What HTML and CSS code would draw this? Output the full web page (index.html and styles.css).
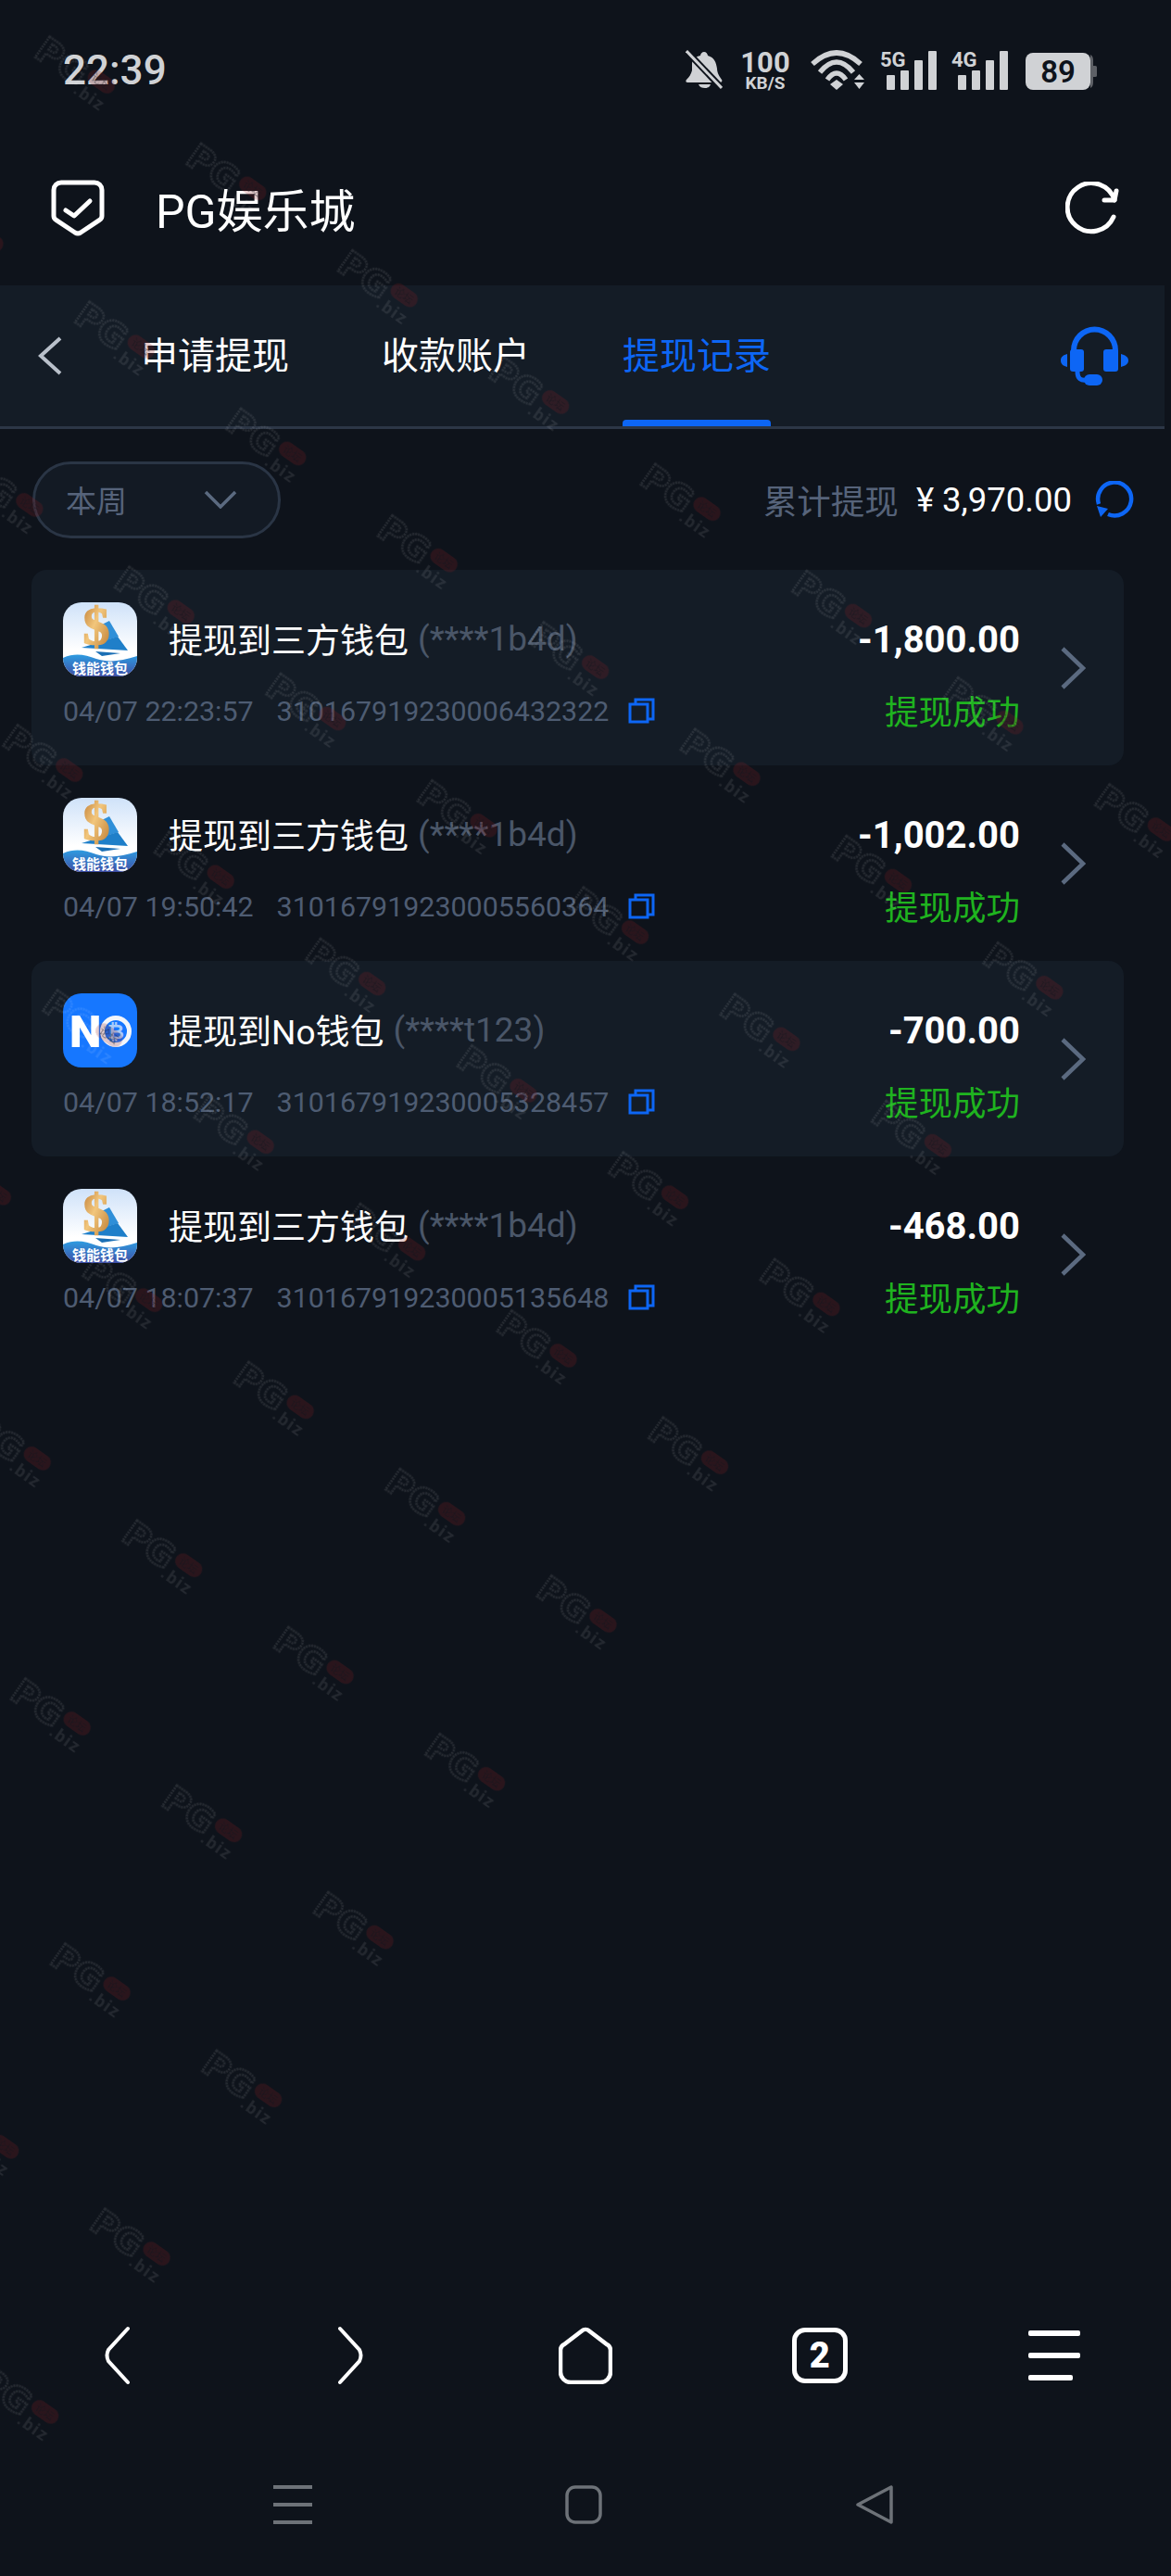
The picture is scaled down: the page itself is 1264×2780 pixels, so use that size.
FILE: index.html
```html
<!DOCTYPE html>
<html lang="zh-CN">
<head>
  <meta charset="UTF-8">
  <title>提现记录</title>
  <link rel="stylesheet" href="styles.css">
</head>
<body>

  <!-- Shared icons -->
  <svg class="defs" width="0" height="0">
    <defs>
      <linearGradient id="sky" x1="0" y1="0" x2="0" y2="1">
        <stop offset="0" stop-color="#cfe2f9"/>
        <stop offset="0.65" stop-color="#ffffff"/>
      </linearGradient>
      <linearGradient id="sea" x1="0" y1="0" x2="0" y2="1">
        <stop offset="0" stop-color="#2e9be0"/>
        <stop offset="1" stop-color="#3f4fa6"/>
      </linearGradient>
      <linearGradient id="gold" x1="0" y1="0" x2="1" y2="1">
        <stop offset="0" stop-color="#b8722a"/>
        <stop offset="0.45" stop-color="#f2c67c"/>
        <stop offset="1" stop-color="#b8762c"/>
      </linearGradient>
      <symbol id="wallet-logo" viewBox="0 0 80 80">
        <rect width="80" height="80" fill="url(#sky)"/>
        <polygon points="42,24 50,20 60,37 47,41" fill="#2f8fd8"/>
        <polygon points="20,49 59,37 70,52" fill="#1f7fc9"/>
        <polygon points="35,53 62,55 42,58" fill="#1b6fb5"/>
        <text x="36" y="45" class="logo-coin" fill="url(#gold)" stroke="url(#gold)">$</text>
        <path d="M0 60c14-6 24-3 36 1s26 3 44-3v22H0z" fill="url(#sea)"/>
        <text x="40" y="77" class="logo-name">钱能钱包</text>
      </symbol>
      <symbol id="copy" viewBox="0 0 30 28">
        <path d="M9 6V2h19v21h-5" fill="none" stroke="#0d66f5" stroke-width="3"/>
        <rect x="3" y="7" width="19" height="19" fill="none" stroke="#0d66f5" stroke-width="3"/>
      </symbol>
      <symbol id="more" viewBox="0 0 28 48">
        <path d="M3 3l22 21L3 45" fill="none" stroke="#5b6a80" stroke-width="4.500"/>
      </symbol>
    </defs>
  </svg>

  <div class="status-bar">
    <span class="clock">22:39</span>
    <div class="status-icons">
      <svg width="40" height="44" viewBox="0 0 40 44">
        <g fill="#d0d2d5">
          <path d="M20 2c2 0 4 2 4 4 7 2 9 7 10 14 0 5 3 9 5 12 1 1 0 3-2 3H2c-2 0-2-2-1-3 3-3 5-6 6-10V14c1-4 4-7 9-8 0-2 2-4 4-4z"/>
          <path d="M14 37h13c-1 3-3 4-6 4s-6-1-7-4z"/>
        </g>
        <path d="M1 1l38 40" stroke="#0e131b" stroke-width="7"/>
        <path d="M1 1l38 40" stroke="#d0d2d5" stroke-width="3"/>
      </svg>
      <div class="net-speed">
        <span class="net-rate">100</span>
        <span class="net-unit">KB/S</span>
      </div>
      <svg class="status-strip" width="309" height="44" viewBox="135 0 309 44">
        <g fill="none" stroke="#d0d2d5" stroke-width="5.500">
          <path d="M137 15Q163-9 189 15"/>
          <path d="M145 24Q163 2 181 24"/>
          <path d="M153 32Q163 18 173 32"/>
        </g>
        <path d="M156 37l7-5 7 5-7 6z" fill="#d0d2d5"/>
        <path d="M182 32l5.500-6 5.500 6zM182 35h11l-5.500 7z" fill="#d0d2d5"/>
        <text x="210" y="18" class="st st-net">5G</text>
        <g fill="#d0d2d5">
          <rect x="217" y="27" width="9" height="16" rx="1"/>
          <rect x="232" y="22" width="9" height="21" rx="1"/>
          <rect x="247" y="11" width="9" height="32" rx="1"/>
          <rect x="262" y="1" width="9" height="42" rx="1"/>
        </g>
        <text x="287" y="18" class="st st-net">4G</text>
        <g fill="#d0d2d5">
          <rect x="294" y="27" width="9" height="16" rx="1"/>
          <rect x="309" y="22" width="9" height="21" rx="1"/>
          <rect x="324" y="11" width="9" height="32" rx="1"/>
          <rect x="339" y="1" width="9" height="42" rx="1"/>
        </g>
        <rect x="367" y="3" width="70" height="40" rx="8" fill="#d0d2d5"/>
        <path d="M437 5c2 1 3 3 3 6v6h2c2 0 2 1 2 2v8c0 1 0 2-2 2h-2v6c0 3-1 5-3 6z" fill="#5d6066"/>
        <text x="402" y="35" class="st st-batt">89</text>
      </svg>
    </div>
  </div>

  <div class="app-header">
    <svg width="60" height="64" viewBox="0 0 60 64" fill="none" stroke="#fff" stroke-linejoin="round" stroke-linecap="round">
      <path d="M12 4h36a8 8 0 0 1 8 8v28a5 5 0 0 1-2.500 4.300L33 58a6 6 0 0 1-6 0L6.500 44.300A5 5 0 0 1 4 40V12a8 8 0 0 1 8-8z" stroke-width="5"/>
      <path d="M17 34l9 6 17-16" stroke-width="5"/>
    </svg>
    <span class="app-title">PG娱乐城</span>
    <svg class="app-reload" width="60" height="60" viewBox="0 0 60 60" fill="none" stroke="#fff" stroke-width="5" stroke-linecap="round" stroke-linejoin="round">
      <path d="M52 38A26 26 0 1 1 53 20"/>
      <path d="M55 10l-2 10H42"/>
    </svg>
  </div>

  <div class="tabs">
    <svg class="tabs-back" width="26" height="42" viewBox="0 0 26 42">
      <path d="M24 2L3 21l21 19" fill="none" stroke="#b9c0ca" stroke-width="4"/>
    </svg>
    <a class="tab">申请提现</a>
    <a class="tab">收款账户</a>
    <a class="tab active">提现记录</a>
    <svg class="tabs-help" width="73" height="65" viewBox="0 0 73 65" fill="#0d66f5">
      <path d="M11 36V26a25 25 0 0 1 51 0v10h-6V26a19 19 0 0 0-39 0v10z"/>
      <rect x="10" y="25" width="15" height="24" rx="3"/>
      <rect x="46" y="25" width="16" height="24" rx="3"/>
      <path d="M7 30v14c-4-1-7-3-7-7s3-6 7-7zM65 30v14c4-1 8-3 8-7s-4-6-8-7z"/>
      <path d="M18 49c0 8 4 10 10 9" fill="none" stroke="#0d66f5" stroke-width="5"/>
      <rect x="25" y="52" width="20" height="12" rx="6"/>
    </svg>
  </div>

  <div class="filter-row">
    <div class="period">
      <span>本周</span>
      <svg width="36" height="20" viewBox="0 0 36 20">
        <path d="M2 2l16 16L34 2" fill="none" stroke="#5b6a80" stroke-width="3.500"/>
      </svg>
    </div>
    <div class="total">
      <span class="total-label">累计提现</span>
      <span class="total-value">¥ 3,970.00</span>
      <svg width="42" height="40" viewBox="0 0 42 40" fill="none" stroke="#0d66f5" stroke-width="4.500">
        <path d="M4 25A18 18 0 1 1 14 36"/>
        <path d="M2 27l12 3-8 9z" fill="#0d66f5" stroke="none"/>
      </svg>
    </div>
  </div>

  <div class="records">

    <div class="record shaded">
      <div class="record-main">
        <div class="record-line">
          <svg class="record-logo" width="80" height="80"><use href="#wallet-logo"/></svg>
          <span class="record-title">提现到三方钱包</span>
          <span class="record-account">(****1b4d)</span>
          <span class="record-amount">-1,800.00</span>
        </div>
        <div class="record-line record-meta">
          <span class="record-time">04/07 22:23:57</span>
          <span class="record-no">310167919230006432322</span>
          <svg width="30" height="28"><use href="#copy"/></svg>
          <span class="record-state">提现成功</span>
        </div>
      </div>
      <svg class="record-more" width="28" height="48"><use href="#more"/></svg>
    </div>

    <div class="record">
      <div class="record-main">
        <div class="record-line">
          <svg class="record-logo" width="80" height="80"><use href="#wallet-logo"/></svg>
          <span class="record-title">提现到三方钱包</span>
          <span class="record-account">(****1b4d)</span>
          <span class="record-amount">-1,002.00</span>
        </div>
        <div class="record-line record-meta">
          <span class="record-time">04/07 19:50:42</span>
          <span class="record-no">310167919230005560364</span>
          <svg width="30" height="28"><use href="#copy"/></svg>
          <span class="record-state">提现成功</span>
        </div>
      </div>
      <svg class="record-more" width="28" height="48"><use href="#more"/></svg>
    </div>

    <div class="record shaded">
      <div class="record-main">
        <div class="record-line">
          <svg class="record-logo" width="80" height="80" viewBox="0 0 80 80">
            <rect width="80" height="80" fill="#1677ff"/>
            <text x="7" y="58" class="no-letter">N</text>
            <circle cx="57" cy="41" r="14.500" fill="#1677ff" stroke="#f3f6fb" stroke-width="5"/>
            <text x="57" y="49" class="no-coin">₿</text>
          </svg>
          <span class="record-title">提现到No钱包</span>
          <span class="record-account">(****t123)</span>
          <span class="record-amount">-700.00</span>
        </div>
        <div class="record-line record-meta">
          <span class="record-time">04/07 18:52:17</span>
          <span class="record-no">310167919230005328457</span>
          <svg width="30" height="28"><use href="#copy"/></svg>
          <span class="record-state">提现成功</span>
        </div>
      </div>
      <svg class="record-more" width="28" height="48"><use href="#more"/></svg>
    </div>

    <div class="record">
      <div class="record-main">
        <div class="record-line">
          <svg class="record-logo" width="80" height="80"><use href="#wallet-logo"/></svg>
          <span class="record-title">提现到三方钱包</span>
          <span class="record-account">(****1b4d)</span>
          <span class="record-amount">-468.00</span>
        </div>
        <div class="record-line record-meta">
          <span class="record-time">04/07 18:07:37</span>
          <span class="record-no">310167919230005135648</span>
          <svg width="30" height="28"><use href="#copy"/></svg>
          <span class="record-state">提现成功</span>
        </div>
      </div>
      <svg class="record-more" width="28" height="48"><use href="#more"/></svg>
    </div>

  </div>

  <div class="browser-nav">
    <div class="browser-btn">
      <svg width="28" height="64" viewBox="0 0 28 64" fill="none" stroke="#fff" stroke-width="4" stroke-linecap="round">
        <path d="M26 3L5 26q-3 6 0 12l21 23"/>
      </svg>
    </div>
    <div class="browser-btn">
      <svg width="28" height="64" viewBox="0 0 28 64" fill="none" stroke="#fff" stroke-width="4" stroke-linecap="round">
        <path d="M2 3l21 23q3 6 0 12L2 61"/>
      </svg>
    </div>
    <div class="browser-btn">
      <svg width="58" height="62" viewBox="0 0 58 62" fill="none" stroke="#fff" stroke-width="4.500">
        <path d="M25 4.500a6 6 0 0 1 8 0L52 19a7 7 0 0 1 4 6v24a11 11 0 0 1-11 11H13A11 11 0 0 1 2 49V25a7 7 0 0 1 4-6z"/>
      </svg>
    </div>
    <div class="browser-btn">
      <div class="tab-count">2</div>
    </div>
    <div class="browser-btn">
      <svg width="56" height="54" viewBox="0 0 56 54" fill="#fff">
        <rect width="56" height="6" rx="2"/>
        <rect y="24" width="56" height="6" rx="2"/>
        <rect y="48" width="48" height="6" rx="2"/>
      </svg>
    </div>
  </div>

  <div class="system-nav">
    <div class="system-btn">
      <svg width="42" height="43" viewBox="0 0 42 43" fill="#6d7278">
        <rect width="42" height="4"/>
        <rect y="19" width="42" height="4"/>
        <rect y="38" width="42" height="4"/>
      </svg>
    </div>
    <div class="system-btn">
      <svg width="40" height="42" viewBox="0 0 40 42" fill="none" stroke="#6d7278" stroke-width="3.500">
        <rect x="2" y="2" width="36" height="38" rx="9"/>
      </svg>
    </div>
    <div class="system-btn">
      <svg width="40" height="42" viewBox="0 0 40 42" fill="none" stroke="#6d7278" stroke-width="3.500" stroke-linejoin="round">
        <path d="M38 2v38L2 21z"/>
      </svg>
    </div>
  </div>

  <!-- PG.biz watermark lies over the whole capture -->
  <svg class="watermark" width="1264" height="2780" viewBox="0 0 1264 2780">
    <defs>
      <pattern id="wm" patternUnits="userSpaceOnUse" width="200" height="209" patternTransform="translate(250 1490) rotate(35.2) translate(-4 -34)">
        <text x="4" y="34" class="wm-pg">PG</text>
        <rect x="65" y="6" width="32" height="17" rx="8.500" fill="#8c1a1f" fill-opacity="0.22"/>
        <text x="81" y="19" class="wm-tag">论坛</text>
        <text x="62" y="42" class="wm-biz">.biz</text>
      </pattern>
    </defs>
    <polygon points="0,-32 1264,860 1264,906 0,2718" fill="url(#wm)"/>
  </svg>

</body>
</html>
```

FILE: styles.css
```css
html, body {
  margin: 0;
  padding: 0;
}
body {
  position: relative;
  display: flex;
  flex-direction: column;
  width: 1264px;
  height: 2780px;
  overflow: hidden;
  background-color: #0e131b;
  color: #fff;
  font-family: Roboto, "Noto Sans CJK SC", sans-serif;
}
.defs {
  position: absolute;
}
svg {
  display: block;
  flex: none;
}

/* Status bar */
.status-bar {
  display: flex;
  align-items: center;
  justify-content: space-between;
  height: 130px;
  padding: 22px 80px 0 68px;
  box-sizing: border-box;
  flex: none;
}
.clock {
  font-size: 44px;
  line-height: 50px;
  font-weight: 500;
  color: #d0d2d5;
}
.status-icons {
  display: flex;
  align-items: center;
}
.status-strip {
  overflow: visible;
}
.net-speed {
  display: flex;
  flex-direction: column;
  align-items: center;
  width: 56px;
  margin: 0 21px 0 18px;
  font-weight: 700;
  color: #d0d2d5;
}
.net-rate {
  font-size: 31px;
  line-height: 27px;
}
.net-unit {
  font-size: 19px;
  line-height: 17px;
}
.st {
  fill: #d0d2d5;
  font-weight: 700;
  text-anchor: middle;
}
.st-net {
  font-size: 22px;
  text-anchor: start;
}
.st-batt {
  font-size: 33px;
  fill: #0e131b;
  font-weight: 600;
}

/* App header */
.app-header {
  display: flex;
  align-items: center;
  height: 178px;
  padding: 12px 54px 0;
  box-sizing: border-box;
  flex: none;
}
.app-title {
  margin-left: 54px;
  padding-bottom: 3px;
  font-size: 50px;
}
.app-reload {
  margin-left: auto;
  margin-top: 2px;
}

/* Tabs */
.tabs {
  display: flex;
  align-items: center;
  width: 1257px;
  height: 155px;
  border-bottom: 3px solid #2c3646;
  box-sizing: border-box;
  background-color: #141c26;
  flex: none;
}
.tabs-back {
  margin-left: 41px;
}
.tab {
  position: relative;
  display: flex;
  align-items: center;
  align-self: stretch;
  margin-left: 100px;
  padding-bottom: 7px;
  font-size: 40px;
}
.tabs-back + .tab {
  margin-left: 85px;
}
.tab.active {
  color: #0d66f5;
}
.tab.active::after {
  content: "";
  position: absolute;
  left: 0;
  right: 0;
  bottom: 0;
  height: 7px;
  border-radius: 4px 4px 0 0;
  background-color: #0d66f5;
}
.tabs-help {
  margin-left: auto;
  margin-right: 39px;
}

/* Filter row */
.filter-row {
  display: flex;
  align-items: center;
  justify-content: space-between;
  height: 152px;
  padding: 0 40px 0 35px;
  box-sizing: border-box;
  flex: none;
}
.period {
  display: flex;
  align-items: center;
  justify-content: space-between;
  width: 268px;
  height: 83px;
  padding: 0 44px 0 33px;
  box-sizing: border-box;
  border: 3px solid #2a3545;
  border-radius: 42px;
  background-color: #131a24;
  font-size: 33px;
  color: #56637a;
}
.total {
  display: flex;
  align-items: center;
}
.total-label {
  font-size: 36.500px;
  color: #56637a;
}
.total-value {
  margin-left: 19px;
  margin-right: 25px;
  font-size: 36.500px;
}

/* Records */
.records {
  width: 1179px;
  margin-left: 34px;
  flex: none;
}
.record {
  display: flex;
  align-items: center;
  height: 211px;
  padding: 0 43px 0 34px;
  box-sizing: border-box;
  border-radius: 16px;
}
.record.shaded {
  background-color: #141c26;
}
.record-main {
  flex: 1;
  margin-bottom: 6px;
}
.record-line {
  display: flex;
  align-items: center;
}
.record-logo {
  border-radius: 20px;
}
.record-title {
  margin-left: 34px;
  padding-bottom: 2px;
  font-size: 37px;
}
.record-account {
  margin-left: 10px;
  padding-bottom: 2px;
  font-size: 37px;
  color: #4a5668;
}
.record-amount {
  margin-left: auto;
  font-size: 40px;
  font-weight: 700;
}
.record-meta {
  height: 36px;
  margin-top: 19px;
  font-size: 30.400px;
  color: #4e5c72;
}
.record-no {
  margin-left: 25px;
  margin-right: 20px;
}
.record-state {
  margin-left: auto;
  padding-bottom: 2px;
  font-size: 36.500px;
  color: #1fb31f;
}
.record-more {
  margin-left: 43px;
  margin-right: -2px;
}

/* Logo text */
.logo-coin {
  font-family: "Liberation Serif", serif;
  font-size: 58px;
  font-weight: 700;
  stroke-width: 1.500;
  text-anchor: middle;
}
.logo-name {
  font-size: 15px;
  font-weight: 700;
  fill: #fff;
  text-anchor: middle;
}
.no-letter {
  font-size: 49px;
  font-weight: 900;
  fill: #fff;
}
.no-coin {
  font-family: "DejaVu Sans", sans-serif;
  font-size: 22px;
  font-weight: 700;
  fill: #a9cdfb;
  text-anchor: middle;
}

/* Browser toolbar */
.browser-nav {
  display: flex;
  height: 120px;
  margin-top: auto;
  margin-bottom: 24px;
  flex: none;
}
.browser-btn {
  display: flex;
  align-items: center;
  justify-content: center;
  flex: 1;
}
.tab-count {
  width: 60px;
  height: 60px;
  box-sizing: border-box;
  border: 5px solid #fff;
  border-radius: 14px;
  font-size: 38px;
  font-weight: 900;
  line-height: 50px;
  text-align: center;
}

/* System nav */
.system-nav {
  display: flex;
  justify-content: center;
  height: 154px;
  padding-right: 4px;
  flex: none;
}
.system-btn {
  display: flex;
  align-items: center;
  justify-content: center;
  width: 314px;
}

/* Watermark */
.watermark {
  position: absolute;
  left: 0;
  top: 0;
  pointer-events: none;
}
.wm-pg {
  font-family: "DejaVu Sans", sans-serif;
  font-size: 38px;
  font-weight: 700;
  fill: none;
  stroke: #ffffff;
  stroke-opacity: 0.1;
  stroke-width: 2.500;
  stroke-dasharray: 2 1;
}
.wm-tag {
  font-size: 11px;
  fill: #0e131b;
  fill-opacity: 0.5;
  text-anchor: middle;
}
.wm-biz {
  font-size: 18px;
  font-weight: 700;
  letter-spacing: 2px;
  fill: #ffffff;
  fill-opacity: 0.09;
}
```
